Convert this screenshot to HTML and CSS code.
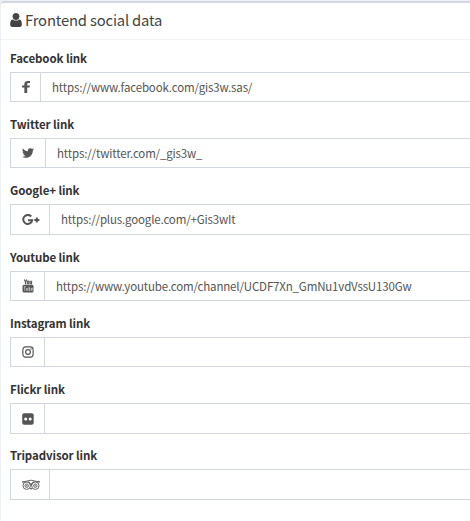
FILE: index.html
```html
<!DOCTYPE html>
<html lang="en">
<head>
<meta charset="utf-8">
<title>Frontend social data</title>
<link rel="stylesheet" href="styles.css">
</head>
<body>
<section class="box">
  <header class="box-header">
    <svg class="user-icon" viewBox="256 128 1280 1536"><path d="M1536 1399q0 109-62.500 187t-150.500 78h-854q-88 0-150.500-78t-62.500-187q0-85 8.500-160.500t31.500-152 58.500-131 94-89 134.500-34.500q131 128 313 128t313-128q76 0 134.500 34.500t94 89 58.500 131 31.500 152 8.500 160.500zm-256-887q0 159-112.500 271.500t-271.500 112.500-271.500-112.500-112.500-271.500 112.500-271.500 271.500-112.500 271.500 112.500 112.500 271.500z"/></svg>
    <h3 class="box-title">Frontend social data</h3>
  </header>
  <form class="box-body">
    <div class="field">
      <label class="label">Facebook link</label>
      <div class="group">
        <span class="addon addon-narrow"><svg width="8" height="12" viewBox="479 0 864 1664" preserveAspectRatio="none"><path d="M1343 12v264h-157q-86 0-116 36t-30 108v189h293l-39 296h-254v759h-306v-759h-255v-296h255v-218q0-186 104-288.500t277-102.500q147 0 228 12z"/></svg></span>
        <span class="control">https://www.facebook.com/gis3w.sas/</span>
      </div>
    </div>
    <div class="field">
      <label class="label">Twitter link</label>
      <div class="group">
        <span class="addon addon-medium"><svg width="12" height="10" viewBox="108 256 1576 1280"><path d="M1684 408q-67 98-162 167 1 14 1 42 0 130-38 259.500t-115.500 248.500-184.500 210.500-258 146-323 54.500q-271 0-496-145 35 4 78 4 225 0 401-138-105-2-188-64.500t-114-159.500q33 5 61 5 43 0 85-11-112-23-185.500-111.500t-73.500-205.500v-4q68 38 146 41-66-44-105-115t-39-154q0-88 44-163 121 149 294.500 238.500t371.500 99.500q-8-38-8-74 0-134 94.500-228.500t228.500-94.500q140 0 236 102 109-21 205-78-37 115-142 178 93-10 186-50z"/></svg></span>
        <span class="control">https://twitter.com/_gis3w_</span>
      </div>
    </div>
    <div class="field field-spaced">
      <label class="label">Google+ link</label>
      <div class="group group-tall">
        <span class="addon addon-wide"><svg class="line" width="18" height="12" viewBox="0 0 18 12"><path stroke-width="2" d="M9.200 2.500A4.500 4.500 0 1 0 10.200 6.300H6M12.300 6H17.400M14.850 3.500V8.500"/></svg></span>
        <span class="control">https://plus.google.com/+Gis3wIt</span>
      </div>
    </div>
    <div class="field">
      <label class="label">Youtube link</label>
      <div class="group">
        <span class="addon"><svg width="12" height="14" viewBox="0 0 12 14"><path class="line" stroke-width="1.100" d="M2.300.4L3.500 3V5.300M4.700.4L3.500 3M5.200 2.800a.8.800 0 0 1 1.600 0v1.300a.8.800 0 0 1-1.600 0zM8.100 1.700v2.700q.8.800 1.500-.2V1.700V5.200"/><rect x=".5" y="5.800" width="11" height="7.700" rx="1.500"/><path class="cut" d="M1.600 7.700h2.200M2.700 7.700v4.200M4.500 9v2.300h1.100V9M7 7.500v4.100h1V9.200H7M10.700 11.500H9.500V9.200h1.100v1.100H9.500"/></svg></span>
        <span class="control">https://www.youtube.com/channel/UCDF7Xn_GmNu1vdVssU130Gw</span>
      </div>
    </div>
    <div class="field">
      <label class="label">Instagram link</label>
      <div class="group">
        <span class="addon"><svg class="line" width="12" height="12" viewBox="0 0 12 12"><rect x=".9" y=".9" width="10.200" height="10.200" rx="2.500" stroke-width="1.150"/><circle cx="6" cy="6" r="2.400" stroke-width="1.150"/><circle class="solid" cx="9" cy="3" r=".7"/></svg></span>
        <span class="control"></span>
      </div>
    </div>
    <div class="field">
      <label class="label">Flickr link</label>
      <div class="group group-tall">
        <span class="addon"><svg width="12" height="12" viewBox="0 0 12 12"><rect x=".2" y=".3" width="11.500" height="11.400" rx="2"/><circle class="hole" cx="3.700" cy="6" r="1.500"/><circle class="hole" cx="8.200" cy="6" r="1.500"/></svg></span>
        <span class="control"></span>
      </div>
    </div>
    <div class="field">
      <label class="label">Tripadvisor link</label>
      <div class="group group-tall">
        <span class="addon addon-wide"><svg class="line" width="18" height="12" viewBox="0 0 18 12"><g stroke-width=".9"><circle cx="4.700" cy="6.700" r="3.700"/><circle cx="13.300" cy="6.700" r="3.700"/><circle cx="4.700" cy="6.700" r="1.700"/><circle cx="13.300" cy="6.700" r="1.700"/><path d="M.4 2.500H3Q9-.1 15 2.500h2.600M.4 2.500l1.100 2M17.600 2.500l-1.100 2M5.800 2.500Q8.700 3.600 9 6.500Q9.300 3.600 12.200 2.500M8.100 9L9 10.300 9.900 9"/></g><circle class="solid" cx="4.700" cy="6.700" r=".6"/><circle class="solid" cx="13.300" cy="6.700" r=".6"/></svg></span>
        <span class="control"></span>
      </div>
    </div>
  </form>
</section>
</body>
</html>
```
FILE: styles.css
```css
* { box-sizing: border-box; }
body {
  margin: 0;
  padding: 1px 0 0 1px;
  height: 521px;
  overflow: hidden;
  background: #ecf0f5;
  color: #333;
  font-family: "Noto Sans CJK JP", sans-serif;
}
.box {
  height: 520px;
  background: #fff;
  border-top: 2px solid #d2d6de;
  border-top-left-radius: 3px;
}
.box-header {
  display: flex;
  align-items: center;
  gap: 3px;
  height: 37px;
  padding: 0 0 2px 9px;
  border-bottom: 1px solid #f4f4f4;
}
.user-icon { width: 12px; height: 14px; fill: #444; }
.box-title {
  margin: 0;
  font-size: 14.8px;
  font-weight: 400;
  line-height: 20px;
  letter-spacing: -0.17px;
  color: #444;
}
.box-body { padding: 9px 0 0 9px; }
.field { height: 66px; }
.field-spaced { height: 67px; }
.label {
  display: block;
  height: 23px;
  font-size: 11.5px;
  font-weight: 700;
  line-height: 18px;
  letter-spacing: -0.1px;
}
.group {
  display: flex;
  height: 30px;
  border: 1px solid #d2d6de;
  border-right: 0;
}
.group-tall { height: 31px; }
.addon {
  display: flex;
  align-items: center;
  width: 34px;
  padding-left: 11px;
  border-right: 1px solid #d2d6de;
  flex: none;
}
.addon-narrow { width: 30px; }
.addon-medium { width: 35px; }
.addon-wide { width: 39px; }
.addon svg { fill: #555; }
.addon .line { fill: none; stroke: #555; }
.line .solid { fill: #555; stroke: none; }
.cut { fill: none; stroke: #fff; stroke-width: .5; }
.hole { fill: #fff; }
.control {
  padding-left: 11px;
  font-size: 11.5px;
  line-height: 28px;
  letter-spacing: -0.155px;
  color: #555;
  white-space: nowrap;
}
```
